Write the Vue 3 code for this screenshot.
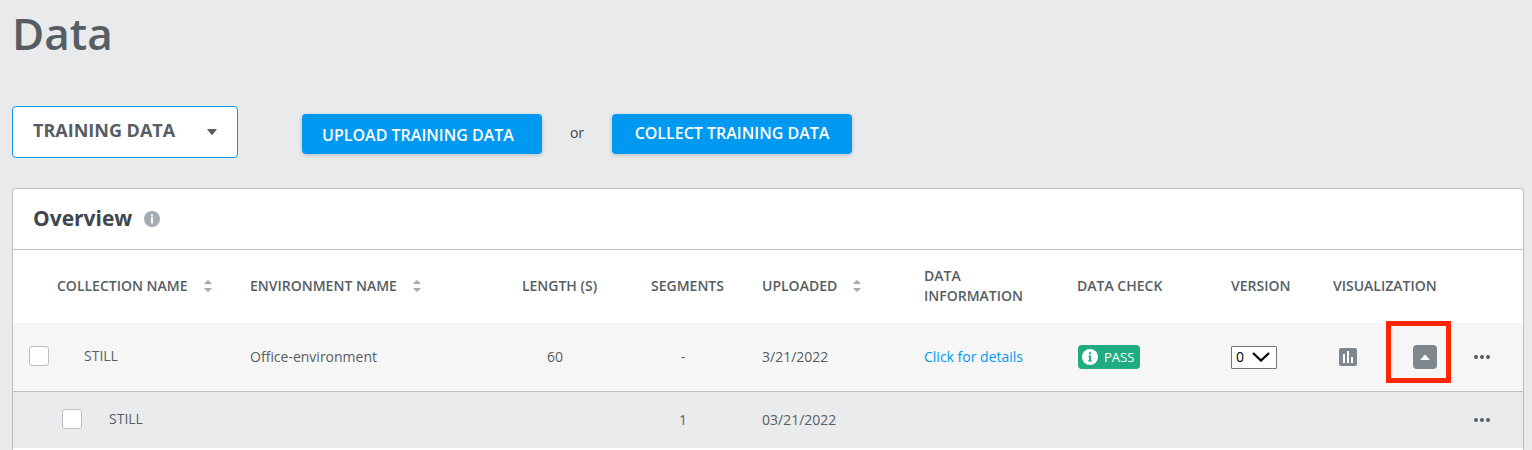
<script setup>
import { ref } from 'vue'

const dataset = ref('training')
const version = ref('0')
</script>

<template>
  <main class="page">
    <h1 class="title">Data</h1>

    <div class="toolbar">
      <div class="dataset">
        <select v-model="dataset" class="dataset-select" aria-label="Dataset">
          <option value="training">TRAINING DATA</option>
          <option value="test">TEST DATA</option>
        </select>
        <svg class="dataset-arrow" width="10" height="6" viewBox="0 0 10 6" aria-hidden="true">
          <path d="M0 0H10L5.8 5.4Q5 6.3 4.2 5.4Z" fill="#565e64" />
        </svg>
      </div>
      <button type="button" class="action upload">UPLOAD TRAINING DATA</button>
      <span class="or">or</span>
      <button type="button" class="action collect">COLLECT TRAINING DATA</button>
    </div>

    <section class="card">
      <header class="card-head">
        <h2 class="card-title">Overview</h2>
        <svg width="16" height="16" viewBox="0 0 16 16" role="img" aria-label="Information">
          <circle cx="8" cy="8" r="8" fill="#a5abb3" />
          <path d="M7 3.5h2v2H7zM7 6.5h2v6H7z" fill="#fff" />
        </svg>
      </header>

      <table class="grid">
        <colgroup>
          <col class="c-name" />
          <col />
          <col class="c-length" />
          <col class="c-segments" />
          <col class="c-uploaded" />
          <col class="c-info" />
          <col class="c-check" />
          <col class="c-version" />
          <col class="c-chart" />
          <col class="c-expand" />
          <col class="c-more" />
        </colgroup>
        <thead>
          <tr>
            <th class="name-head" scope="col">
              <button type="button" class="sort">
                COLLECTION NAME
                <svg width="8" height="12" viewBox="0 0 8 12" aria-hidden="true"><path d="M0 4L3.2 0.6Q4 0 4.8 0.6L8 4ZM0 8L3.2 11.4Q4 12 4.8 11.4L8 8Z" fill="#a5abb3" /></svg>
              </button>
            </th>
            <th scope="col">
              <button type="button" class="sort">
                ENVIRONMENT NAME
                <svg width="8" height="12" viewBox="0 0 8 12" aria-hidden="true"><path d="M0 4L3.2 0.6Q4 0 4.8 0.6L8 4ZM0 8L3.2 11.4Q4 12 4.8 11.4L8 8Z" fill="#a5abb3" /></svg>
              </button>
            </th>
            <th class="center" scope="col">LENGTH (S)</th>
            <th class="center" scope="col">SEGMENTS</th>
            <th scope="col">
              <button type="button" class="sort">
                UPLOADED
                <svg width="8" height="12" viewBox="0 0 8 12" aria-hidden="true"><path d="M0 4L3.2 0.6Q4 0 4.8 0.6L8 4ZM0 8L3.2 11.4Q4 12 4.8 11.4L8 8Z" fill="#a5abb3" /></svg>
              </button>
            </th>
            <th scope="col">DATA<br />INFORMATION</th>
            <th scope="col">DATA CHECK</th>
            <th scope="col">VERSION</th>
            <th scope="colgroup" colspan="2">VISUALIZATION</th>
            <td></td>
          </tr>
        </thead>
        <tbody>
          <tr class="row">
            <td>
              <label class="pick"><input type="checkbox" />STILL</label>
            </td>
            <td>Office-environment</td>
            <td class="center value">60</td>
            <td class="center value">-</td>
            <td>3/21/2022</td>
            <td><a class="link" href="#details">Click for details</a></td>
            <td>
              <span class="badge">
                <svg width="16" height="16" viewBox="0 0 16 16" aria-hidden="true">
                  <circle cx="8" cy="8" r="8" fill="#fff" />
                  <path d="M7 3.2h2v2H7zM6.2 6.4H9v4.8h1v1.3H6.2v-1.3H7V7.6h-.8z" fill="#20ac81" />
                </svg>
                PASS
              </span>
            </td>
            <td>
              <span class="version">
                <select v-model="version" class="version-select" aria-label="Version">
                  <option value="0">0</option>
                </select>
                <svg class="version-arrow" width="18" height="10" viewBox="0 0 18 10" aria-hidden="true">
                  <path d="M1 1L9 8.6L17 1" fill="none" stroke="#000" stroke-width="2.2" />
                </svg>
              </span>
            </td>
            <td>
              <button type="button" class="icon-button chart" aria-label="Show chart">
                <svg width="18" height="18" viewBox="0 0 18 18">
                  <rect width="18" height="18" rx="2" fill="#7e868e" />
                  <path d="M4 6h2v9H4zM8 3h2v12H8zM12 9h2v6h-2z" fill="#fff" />
                </svg>
              </button>
            </td>
            <td>
              <button type="button" class="icon-button expand" aria-label="Collapse row">
                <svg width="24" height="24" viewBox="0 0 24 24">
                  <rect width="24" height="24" rx="4" fill="#7e868e" />
                  <path d="M7 15L12 9.4L17 15Z" fill="#fff" />
                </svg>
                <span class="highlight"></span>
              </button>
            </td>
            <td>
              <button type="button" class="icon-button more" aria-label="More actions">
                <svg width="16" height="4" viewBox="0 0 16 4" fill="#565e64"><circle cx="2" cy="2" r="2" /><circle cx="8" cy="2" r="2" /><circle cx="14" cy="2" r="2" /></svg>
              </button>
            </td>
          </tr>
          <tr class="subrow">
            <td>
              <label class="pick"><input type="checkbox" />STILL</label>
            </td>
            <td></td>
            <td></td>
            <td class="center value">1</td>
            <td>03/21/2022</td>
            <td></td>
            <td></td>
            <td></td>
            <td></td>
            <td></td>
            <td>
              <button type="button" class="icon-button more" aria-label="More actions">
                <svg width="16" height="4" viewBox="0 0 16 4" fill="#565e64"><circle cx="2" cy="2" r="2" /><circle cx="8" cy="2" r="2" /><circle cx="14" cy="2" r="2" /></svg>
              </button>
            </td>
          </tr>
        </tbody>
      </table>
    </section>
  </main>
</template>

<style>
body {
  margin: 0;
  background: #e9eaec;
}
</style>

<style scoped>
.page {
  box-sizing: border-box;
  min-height: 100vh;
  padding: 3px 8px 0 12px;
  display: flex;
  flex-direction: column;
  background: #e9eaec;
  color: #565e64;
  font: 14px/20px "Open Sans", "Noto Sans", sans-serif;
}
button,
select {
  font-family: inherit;
}
.title {
  margin: 0;
  font-size: 44px;
  line-height: 60px;
  font-weight: 600;
}
.toolbar {
  display: flex;
  margin-top: 43px;
  align-items: center;
}
.dataset {
  position: relative;
  width: 226px;
  margin-right: 64px;
}
.dataset-select {
  display: block;
  box-sizing: border-box;
  width: 100%;
  height: 52px;
  padding: 0 40px 4px 20px;
  appearance: none;
  border: 1px solid #0f97e8;
  border-radius: 4px;
  background: #fff;
  color: #565e64;
  font-size: 18px;
  font-weight: 700;
}
.dataset-arrow {
  position: absolute;
  right: 21px;
  top: 23px;
  pointer-events: none;
}
.action {
  box-sizing: border-box;
  width: 240px;
  height: 40px;
  margin-top: 4px;
  padding: 0 0 2px;
  border: 0;
  border-radius: 4px;
  background: #0099f2;
  box-shadow: 0 1px 4px rgba(0, 0, 0, 0.2);
  color: #fff;
  font-size: 16px;
  font-weight: 600;
}
.upload {
  padding: 2px 8px 0 0;
}
.or {
  width: 70px;
  margin-top: 2px;
  text-align: center;
  color: #3d4449;
}
.card {
  flex: 1;
  margin-top: 30px;
  border: 1px solid #bcbec5;
  border-bottom: 0;
  border-radius: 4px 4px 0 0;
  background: #fff;
}
.card-head {
  display: flex;
  align-items: center;
  gap: 12px;
  height: 60px;
  padding-left: 20px;
  border-bottom: 1px solid #bcbec5;
}
.card-title {
  margin: 0;
  padding-bottom: 2px;
  color: #40474d;
  font-size: 21px;
  line-height: 28px;
  font-weight: 700;
}
.grid {
  width: 100%;
  table-layout: fixed;
  border-collapse: separate;
  border-spacing: 0;
}
.c-name { width: 237px; }
.c-length { width: 107px; }
.c-segments { width: 149px; }
.c-uploaded { width: 162px; }
.c-info { width: 153px; }
.c-check { width: 154px; }
.c-version { width: 102px; }
.c-chart { width: 65px; }
.c-expand { width: 54px; }
.c-more { width: 71px; }
th,
td {
  padding: 0;
  text-align: left;
  vertical-align: middle;
  font-weight: 400;
}
th {
  height: 71px;
  padding-bottom: 2px;
  font-weight: 600;
}
th.name-head {
  padding-left: 44px;
}
.center {
  text-align: center;
}
.value {
  padding-right: 9px;
}
.sort {
  display: flex;
  align-items: center;
  gap: 16px;
  padding: 0;
  border: 0;
  background: none;
  color: inherit;
  font-size: 14px;
  line-height: 20px;
  font-weight: 600;
  white-space: nowrap;
}
.row td {
  height: 68px;
  background: #f6f6f6;
  border-bottom: 1px solid #bcbec5;
}
.subrow td {
  height: 56px;
  background: #eaebed;
}
.pick {
  display: flex;
  align-items: center;
  gap: 35px;
  padding: 0 0 3px 16px;
}
.subrow .pick {
  gap: 27px;
  padding-left: 49px;
}
.pick input {
  box-sizing: border-box;
  width: 20px;
  height: 20px;
  margin: 0;
  appearance: none;
  border: 1px solid #bcbec5;
  border-radius: 3px;
  background: #fff;
}
.link {
  color: #0099f2;
  text-decoration: none;
}
.badge {
  display: inline-flex;
  align-items: center;
  gap: 6px;
  height: 24px;
  margin-left: 1px;
  padding: 0 6px 0 4px;
  border-radius: 4px;
  background: #20ac81;
  color: #fff;
  font-size: 13px;
  vertical-align: middle;
}
.version {
  display: block;
  position: relative;
  width: 46px;
}
.version-select {
  display: block;
  box-sizing: border-box;
  width: 100%;
  height: 23px;
  padding: 0 0 2px 4px;
  appearance: none;
  border: 1px solid #767676;
  border-radius: 1px;
  background: #fff;
  color: #000;
  font-size: 14px;
}
.version-arrow {
  position: absolute;
  right: 7px;
  top: 6px;
  pointer-events: none;
}
.icon-button {
  display: block;
  padding: 0;
  border: 0;
  background: none;
}
.icon-button svg {
  display: block;
}
.chart {
  margin-left: 6px;
}
.expand {
  position: relative;
  margin-left: 15px;
}
.more {
  margin-left: 22px;
}
.highlight {
  position: absolute;
  inset: -24px -14px -14px -27px;
  border: 5px solid #ff2600;
}
</style>
